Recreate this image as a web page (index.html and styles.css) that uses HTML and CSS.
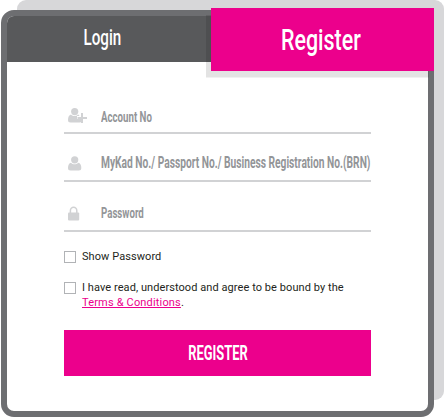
FILE: index.html
```html
<!DOCTYPE html>
<html>
  <head>
    <title>Register</title>
    <meta charset="UTF-8">
    <meta name="viewport" content="width=device-width, initial-scale=1.0">
    <link rel="stylesheet" href="styles.css">
  </head>
  <body>
    <div class="card">
      <div class="tabs">
        <div class="tab"><span class="narrow">Login</span></div>
        <div class="tab active"><span class="narrow">Register</span></div>
      </div>
      <form class="form">
        <div class="field account">
          <svg class="icon" viewBox="0 0 33 15">
            <circle cx="6.7" cy="3.6" r="3.6"/>
            <path d="M3 6.500C1 7 0 9 0 12c0 1.700.8 2.500 2.500 2.500h9c1 0 1.800-.3 2.200-.9V11H9V8h2.500c-.3-.8-.8-1.300-1.500-1.500C8 8.500 5 8.500 3 6.500z"/>
            <path d="M13 5h2v4h4v2h-4v4h-2v-4H9.500V9H13z"/>
          </svg>
          <span class="narrow">Account No</span>
        </div>
        <div class="field mykad">
          <svg class="icon" viewBox="0 0 33 15">
            <circle cx="6.700" cy="3.800" r="3.600"/>
            <path d="M3 6.700C1 7 0 9 0 12c0 1.700.8 2.500 2.500 2.500h8.300c1.700 0 2.500-.8 2.500-2.500 0-3-1-5-3-5.300C8 8.700 5 8.700 3 6.700z"/>
          </svg>
          <span class="narrow">MyKad No./ Passport No./ Business Registration No.(BRN)</span>
        </div>
        <div class="field password">
          <svg class="icon" viewBox="0 0 33 15">
            <path class="shackle" d="M2.400 7V4.700a3.200 3.500 0 0 1 6.400 0V7"/>
            <rect y="6.500" width="11.200" height="8" rx="1"/>
          </svg>
          <span class="narrow">Password</span>
        </div>
        <div class="check">
          <span class="box"></span>
          <div class="text">Show Password</div>
        </div>
        <div class="check agree">
          <span class="box"></span>
          <div class="text">
            I have read, understood and agree to be bound by the<br>
            <a href="#">Terms &amp; Conditions</a>.
          </div>
        </div>
        <div class="button"><span class="narrow">REGISTER</span></div>
      </form>
    </div>
  </body>
</html>
```
FILE: styles.css
```css
* {
  box-sizing: border-box;
}

body {
  margin: 0;
  height: 417px;
  padding: 10px 10px 0 1px;
  overflow: hidden;
  background-color: white;
  font-family: Roboto, "Liberation Sans", sans-serif;
}

.card {
  position: relative;
  width: 433px;
  height: 407px;
  border: 6px solid #6d6e71;
  border-radius: 13px;
  background-color: white;
}

/* grey sheet behind the card */
.card::before {
  content: "";
  position: absolute;
  z-index: -1;
  top: -16px;
  left: 10px;
  width: 427px;
  height: 400px;
  border-radius: 9px;
  background-color: #d7d7d9;
}

.tabs {
  display: flex;
  height: 46px;
  border-radius: 7px 0 0 0;
  background-color: #58595b;
  color: white;
}

.tab {
  display: flex;
  width: 204px;
  height: 46px;
  flex: none;
  align-items: center;
  justify-content: center;
  font-size: 22px;
  font-weight: 500;
}

.tab .narrow {
  transform: translate(-7px, -2px) scaleX(.69);
}

.tab.active {
  width: 223px;
  height: 62.5px;
  margin-top: -8px;
  background-color: #ec008c;
  box-shadow: -5px 7px 0 rgba(0, 0, 0, .11);
  clip-path: inset(0 0 -7px -5px);
  font-size: 30px;
}

.tab.active .narrow {
  transform: translate(-2px, 0) scaleX(.715);
}

.narrow {
  display: inline-block;
  white-space: nowrap;
}

.form {
  width: 307px;
  margin-left: 57px;
  padding-top: 38px;
}

.field {
  display: flex;
  height: 34px;
  padding-left: 4px;
  border-bottom: 2px solid #d1d2d4;
  color: #939598;
  font-size: 15.5px;
  font-weight: 700;
  line-height: 34px;
}

.field .narrow {
  width: 0;
  transform: scaleX(.625);
  transform-origin: left;
}

.icon {
  width: 33px;
  height: 15px;
  flex: none;
  margin: 8px 0 0;
  fill: #d1d2d4;
}

.shackle {
  fill: none;
  stroke: #d1d2d4;
  stroke-width: 1.5;
}

.mykad {
  margin-top: 14px;
  font-size: 16px;
  line-height: 30px;
}

.mykad .narrow {
  transform: scaleX(.639);
}

.password {
  margin-top: 16px;
  line-height: 31px;
}

.check {
  display: flex;
  height: 16px;
  margin-top: 17px;
  color: #231f20;
  font-size: 11px;
  line-height: 15px;
}

.agree {
  height: 32px;
  margin-top: 15px;
}

.box {
  width: 12px;
  height: 12px;
  flex: none;
  margin: 2px 6px 0 0;
  border: 1px solid #b1b3b6;
}

.text {
  letter-spacing: .07px;
  white-space: nowrap;
}

.text a {
  color: #ec008c;
  letter-spacing: .17px;
  text-decoration-skip-ink: none;
}

.button {
  display: flex;
  height: 46px;
  margin-top: 18px;
  align-items: center;
  justify-content: center;
  background-color: #ec008c;
  color: white;
  font-size: 19.5px;
  font-weight: 700;
}

.button .narrow {
  transform: translateX(1px) scaleX(.66);
}
```
